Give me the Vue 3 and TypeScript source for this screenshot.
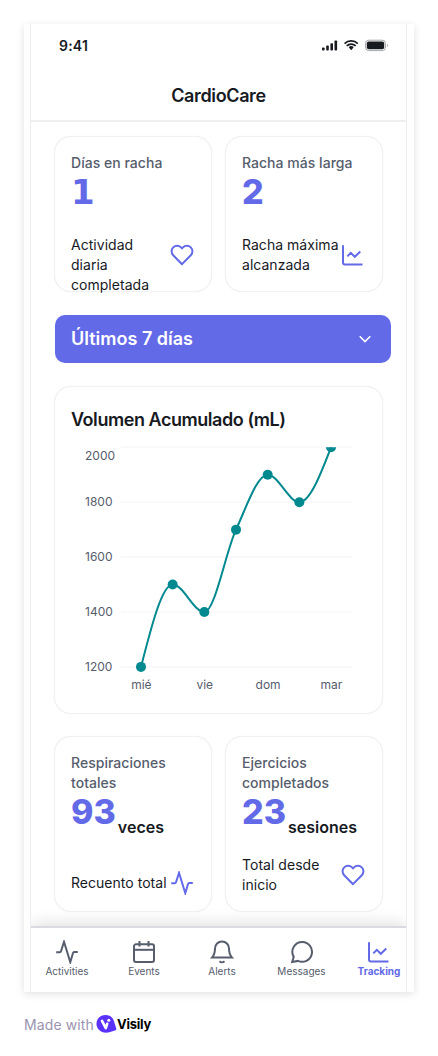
<script setup lang="ts">
interface Stat {
  title: string
  value: string
  unit?: string
  note: string
  icon: string
}

const icons: Record<string, string[]> = {
  heart: ['M12 21.2 3.2 12.3a5.6 5.6 0 0 1 0-7.9 5.5 5.5 0 0 1 7.8 0l1 1 1-1a5.5 5.5 0 0 1 7.8 0 5.6 5.6 0 0 1 0 7.9z'],
  chart: ['M2 2.2v17.3a2 2 0 0 0 2 2h17.500', 'M6.300 13.400l3.500-3.600 4 4 5.500-5.300'],
  pulse: ['M1.200 12.200h3.600c.6 0 1-.3 1.200-.9L9 1.800l6.300 20.400 2.700-9.200c.2-.6.600-.9 1.200-.9h3.600'],
  calendar: ['M4 4.300h16a2 2 0 0 1 2 2V20a2 2 0 0 1-2 2H4a2 2 0 0 1-2-2V6.300a2 2 0 0 1 2-2z', 'M2 9.800h20', 'M7.500 1v5.500', 'M16.500 1v5.500'],
  bell: ['M12 1.500a7 7 0 0 0-7 7c0 4.500-1.500 7.500-3 9.100h20c-1.500-1.600-3-4.600-3-9.100a7 7 0 0 0-7-7z', 'M9.500 21.300c1.300 1.200 3.700 1.200 5 0'],
  message: ['M12.500 2A9.900 9.900 0 1 1 8 20.900L2.200 22l1.500-5.200A9.900 9.900 0 0 1 12.500 2z'],
}

const streaks: Stat[] = [
  { title: 'Días en racha', value: '1', note: 'Actividad diaria completada', icon: 'heart' },
  { title: 'Racha más larga', value: '2', note: 'Racha máxima alcanzada', icon: 'chart' },
]
const totals: Stat[] = [
  { title: 'Respiraciones totales', value: '93', unit: 'veces', note: 'Recuento total', icon: 'pulse' },
  { title: 'Ejercicios completados', value: '23', unit: 'sesiones', note: 'Total desde inicio', icon: 'heart' },
]
const groups = [
  { key: 'streaks', items: streaks },
  { key: 'totals', items: totals },
]

const tabs = [
  { label: 'Activities', icon: 'pulse' },
  { label: 'Events', icon: 'calendar' },
  { label: 'Alerts', icon: 'bell' },
  { label: 'Messages', icon: 'message' },
  { label: 'Tracking', icon: 'chart', active: true },
]

const volumes = [1200, 1500, 1400, 1700, 1900, 1800, 2000]
const ticks = [2000, 1800, 1600, 1400, 1200]
const days = [
  { label: 'mié', index: 0 },
  { label: 'vie', index: 2 },
  { label: 'dom', index: 4 },
  { label: 'mar', index: 6 },
]
const xAt = (i: number): number => 70 + i * 31.67
const yAt = (v: number): number => 10.3 + (2000 - v) * 0.2745
const points = volumes.map((v, i) => ({ x: xAt(i), y: yAt(v) }))

// Monotone cubic interpolation through the samples.
function smooth(p: { x: number; y: number }[]): string {
  const n = p.length
  const s = p.slice(1).map((q, i) => (q.y - p[i].y) / (q.x - p[i].x))
  const t = p.map((_, i) => {
    if (i === 0 || i === n - 1) return 0
    if (s[i - 1] * s[i] <= 0) return 0
    return Math.sign(s[i]) * Math.min(Math.abs(s[i - 1] + s[i]) / 2, 2 * Math.min(Math.abs(s[i - 1]), Math.abs(s[i])))
  })
  t[0] = (3 * s[0] - t[1]) / 2
  t[n - 1] = (3 * s[n - 2] - t[n - 2]) / 2
  let d = `M${p[0].x} ${p[0].y}`
  for (let i = 1; i < n; i++) {
    const h = (p[i].x - p[i - 1].x) / 3
    d += `C${p[i - 1].x + h} ${p[i - 1].y + h * t[i - 1]} ${p[i].x - h} ${p[i].y - h * t[i]} ${p[i].x} ${p[i].y}`
  }
  return d
}
const line = smooth(points)
</script>

<template>
  <main class="page">
    <div class="frame">
      <div class="phone">
        <header class="top">
          <div class="status">
            <span class="time">9:41</span>
            <svg class="signals" width="68" height="14" viewBox="0 0 68 14">
              <g fill="#171a1f">
                <rect x="1" y="8.500" width="2.600" height="3" rx=".8" />
                <rect x="5.200" y="6.500" width="2.600" height="5" rx=".8" />
                <rect x="9.400" y="4.200" width="2.600" height="7.300" rx=".8" />
                <rect x="13.500" y="1.500" width="2.600" height="10" rx=".8" />
                <path d="M27.700 8.200a3.300 3.300 0 0 1 5 0L30.200 11.300z" />
                <rect x="45.800" y="2.500" width="17.400" height="7.800" rx="2" />
                <path d="M66 5v3c1.200-.4 1.200-2.600 0-3z" opacity=".4" />
              </g>
              <path d="M23.600 4.600a9.500 9.500 0 0 1 13.200 0M25.700 6.900a6.500 6.500 0 0 1 9 0" fill="none" stroke="#171a1f" stroke-width="1.700" />
              <rect x="44.500" y="1.200" width="20" height="10.400" rx="3.300" fill="none" stroke="#171a1f" stroke-opacity=".38" />
            </svg>
          </div>
          <h1>CardioCare</h1>
        </header>

        <section class="content">
          <template v-for="group in groups" :key="group.key">
            <div class="stats" :class="group.key">
              <article v-for="item in group.items" :key="item.title" class="card stat">
                <h2>{{ item.title }}</h2>
                <div class="figure">
                  <strong :class="{ one: item.value === '1' }">{{ item.value }}</strong>
                  <span v-if="item.unit">{{ item.unit }}</span>
                </div>
                <div class="note">
                  <p>{{ item.note }}</p>
                  <svg class="icon" viewBox="0 0 24 24">
                    <path v-for="d in icons[item.icon]" :key="d" :d="d" />
                  </svg>
                </div>
              </article>
            </div>

            <template v-if="group.key === 'streaks'">
              <button class="range" type="button">
                <span>Últimos 7 días</span>
                <svg width="16" height="16" viewBox="0 0 16 16"><path d="M2.700 5.300 8 10.600l5.300-5.300" /></svg>
              </button>
              <article class="card volume">
                <h3>Volumen Acumulado (mL)</h3>
                <svg class="plot" width="297" height="264" viewBox="0 0 297 264">
                  <defs>
                    <clipPath id="plot-area"><rect x="40" y="10.300" width="245" height="240" /></clipPath>
                  </defs>
                  <g v-for="(tick, i) in ticks" :key="tick">
                    <line x1="50" x2="281" :y1="yAt(tick)" :y2="yAt(tick)" />
                    <text x="14" :y="yAt(tick) + (i === 0 ? 12.7 : 4.200)">{{ tick }}</text>
                  </g>
                  <text v-for="day in days" :key="day.label" class="day" :x="xAt(day.index) + 0.4" y="252">{{ day.label }}</text>
                  <g clip-path="url(#plot-area)">
                    <path :d="line" />
                    <circle v-for="pt in points" :key="pt.x" :cx="pt.x" :cy="pt.y" r="5" />
                  </g>
                </svg>
              </article>
            </template>
          </template>
        </section>

        <nav class="tabs">
          <a v-for="tab in tabs" :key="tab.label" :class="{ active: tab.active }">
            <svg class="icon" viewBox="0 0 24 24">
              <path v-for="d in icons[tab.icon]" :key="d" :d="d" />
            </svg>
            <span>{{ tab.label }}</span>
          </a>
        </nav>
      </div>
    </div>

    <footer class="credit">
      <span class="made">Made with</span>
      <svg width="21" height="20" viewBox="0 0 21 20">
        <path d="M9.500 1C14 1 16.800 3.400 17.900 7l2.300 7.200c.4 1.100-.1 2-1.200 2.300l-5.700 1.800C7.500 20 1 16.500.5 10.500 0 5 4.300 1 9.500 1z" fill="#5b32fb" />
        <path d="M6 6.800 9.800 14.200 11.200 9.800" fill="none" stroke="#fff" stroke-width="2.600" stroke-linecap="round" stroke-linejoin="round" />
        <circle cx="12.800" cy="6.200" r="1.500" fill="#fff" />
      </svg>
      <b>Visily</b>
    </footer>
  </main>
</template>

<style>
body {
  margin: 0;
  background: #fff;
}
</style>

<style scoped>
* {
  box-sizing: border-box;
}
.page {
  width: 438px;
  height: 1056px;
  padding: 24px 24px 0;
  overflow: hidden;
  background: #fff;
  color: #171a1f;
  font-family: Inter, "Liberation Sans", sans-serif;
}
h1, h2, h3, p {
  margin: 0;
}
.frame {
  width: 390px;
  height: 968px;
  padding: 0 7px 0 6px;
  background: #fff;
  box-shadow: 0 2px 8px rgba(0, 0, 0, 0.12);
}
.phone {
  display: flex;
  flex-direction: column;
  height: 100%;
  border: solid #ebecef;
  border-width: 0 1px;
}
.top {
  flex: none;
  height: 98px;
  border-bottom: 2px solid #eeeff1;
}
.status {
  display: flex;
  align-items: center;
  justify-content: space-between;
  height: 43px;
  padding: 0 17px 0 28px;
}
.time {
  font-size: 14px;
  font-weight: 600;
  letter-spacing: 0.2px;
}
.signals {
  margin-top: 1px;
}
h1 {
  font-size: 18px;
  font-weight: 600;
  line-height: 58px;
  letter-spacing: -0.37px;
  text-align: center;
}
.content {
  display: flex;
  flex: 1;
  flex-direction: column;
  padding: 14px 15px 0 23px;
}
.card {
  border: 1px solid #f1f1f3;
  border-radius: 17px;
  background: #fff;
  box-shadow: 0 0 1px rgba(23, 26, 31, 0.1);
}
.stats {
  display: grid;
  grid-template-columns: 158px 158px;
  gap: 13px;
}
.stat {
  display: flex;
  flex-direction: column;
  padding: 16px 17px 16px 16px;
}
.streaks .stat {
  height: 156px;
}
.totals .stat {
  height: 176px;
}
h2 {
  color: #565d6d;
  font-size: 14px;
  font-weight: 500;
  line-height: 20px;
  letter-spacing: 0.03px;
}
.figure {
  display: flex;
  align-items: flex-end;
  gap: 2px;
  height: 46px;
}
.figure strong {
  align-self: flex-start;
  color: #636ae8;
  font-size: 34px;
  font-weight: 800;
  line-height: 37px;
}
.figure .one {
  font-family: "DejaVu Sans", sans-serif;
  font-weight: 700;
  line-height: 39px;
}
.figure span {
  font-size: 16px;
  font-weight: 600;
  line-height: 24px;
}
.note {
  display: flex;
  align-items: center;
  justify-content: space-between;
  height: 40px;
  margin-top: auto;
}
.totals .stat:first-child .note {
  height: 24px;
}
.note p {
  width: 98px;
  flex: none;
  font-size: 14px;
  line-height: 20px;
  letter-spacing: 0.03px;
}
.streaks .stat:first-child p {
  align-self: flex-start;
  width: 80px;
}
.icon {
  flex: none;
  width: 24px;
  height: 24px;
  fill: none;
  stroke: currentColor;
  stroke-width: 2;
}
.note .icon {
  color: #636ae8;
}
.range {
  display: flex;
  align-items: center;
  justify-content: space-between;
  width: 336px;
  height: 48px;
  flex: none;
  margin: 23px 0 23px 1px;
  padding: 0 18px 0 16px;
  border: 0;
  border-radius: 10px;
  background: #636ae8;
  color: #fff;
  font: 600 18px/28px Inter, sans-serif;
}
.range path {
  fill: none;
  stroke: #fff;
  stroke-width: 1.6;
}
.volume {
  width: 329px;
  height: 328px;
  flex: none;
  margin-bottom: 22px;
  padding: 19px 15px 0 16px;
}
h3 {
  font-size: 18px;
  font-weight: 600;
  line-height: 28px;
  letter-spacing: -0.45px;
}
.plot {
  display: block;
  margin-top: 3px;
}
.plot line {
  stroke: #f8f8fa;
  stroke-width: 1.6;
}
.plot text {
  fill: #565d6d;
  font: 12px Inter, sans-serif;
}
.plot .day {
  text-anchor: middle;
}
.plot path {
  fill: none;
  stroke: #00898f;
  stroke-width: 2;
}
.plot circle {
  fill: #00898f;
}
.tabs {
  position: relative;
  display: grid;
  grid-template-columns: 72px 82px 74px 85px 70px;
  flex: none;
  height: 66px;
  width: 375px;
  padding-top: 12px;
  border-top: 2px solid #d9dae2;
  background: #fff;
  box-shadow: 0 -4px 14px -1px rgba(23, 26, 31, 0.13);
  clip-path: inset(-18px 0 0 0);
}
.tabs a {
  display: flex;
  flex-direction: column;
  align-items: center;
  color: #565d6d;
  font-size: 10px;
  line-height: 15px;
}
.tabs .active {
  color: #636ae8;
  font-weight: 700;
}
.credit {
  display: flex;
  align-items: center;
  height: 24px;
  margin-top: 20px;
}
.made {
  width: 72px;
  color: #9b94b0;
  font-size: 14px;
  letter-spacing: 0.1px;
  white-space: nowrap;
}
.credit svg,
.credit b {
  flex: none;
}
.credit b {
  color: #000;
  font-size: 13px;
  font-weight: 700;
  letter-spacing: -0.25px;
}
</style>
